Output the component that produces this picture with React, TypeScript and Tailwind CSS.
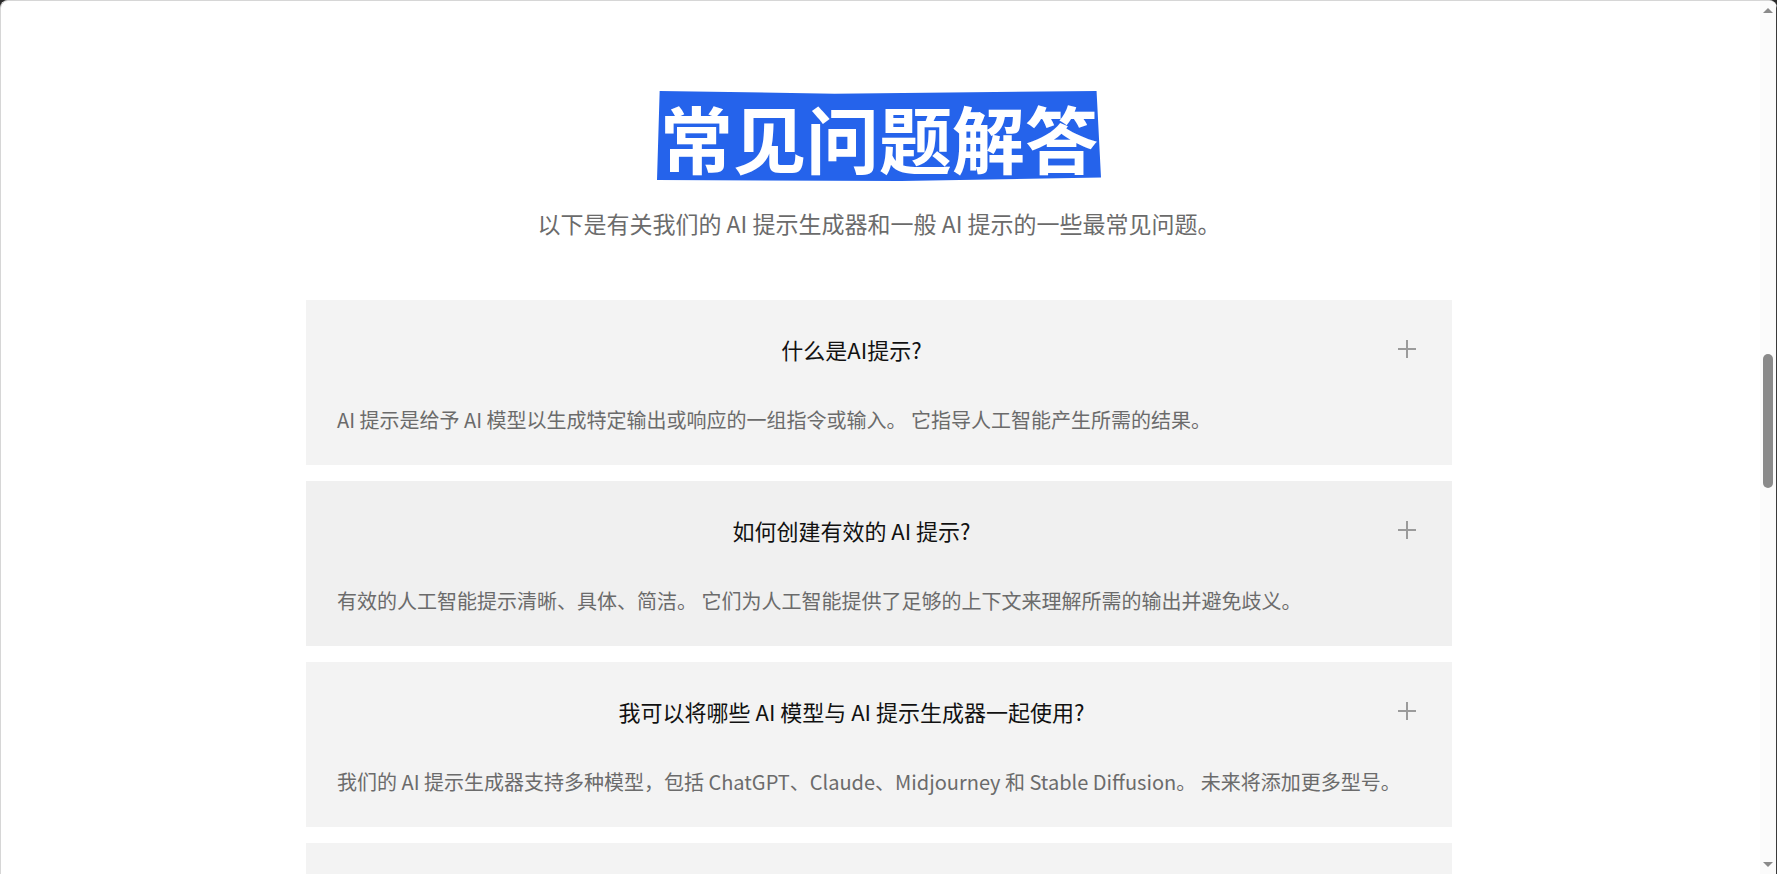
import React from "react";

const faqs = [
  {
    q: "什么是AI提示?",
    a: "AI 提示是给予 AI 模型以生成特定输出或响应的一组指令或输入。 它指导人工智能产生所需的结果。",
    bg: "bg-[#f3f3f3]",
  },
  {
    q: "如何创建有效的 AI 提示?",
    a: "有效的人工智能提示清晰、具体、简洁。 它们为人工智能提供了足够的上下文来理解所需的输出并避免歧义。",
    bg: "bg-[#f0f0f0]",
  },
  {
    q: "我可以将哪些 AI 模型与 AI 提示生成器一起使用?",
    a: "我们的 AI 提示生成器支持多种模型，包括 ChatGPT、Claude、Midjourney 和 Stable Diffusion。 未来将添加更多型号。",
    bg: "bg-[#f3f3f3]",
  },
  {
    q: "AI 提示生成器是免费使用的吗?",
    a: "是的，您可以免费使用我们的 AI 提示生成器。",
    bg: "bg-[#f3f3f3]",
  },
];

function PlusIcon() {
  return (
    <svg width="20" height="20" viewBox="0 0 20 20" className="shrink-0">
      <path d="M10 1 V19 M1 10 H19" stroke="#9b9b9b" strokeWidth="2" fill="none" />
    </svg>
  );
}

export default function App() {
  return (
    <div
      className="h-screen w-full overflow-hidden bg-[#2a2a2a]"
      style={{ fontFamily: '"Noto Sans CJK SC", "Noto Sans", sans-serif' }}
    >
      <div className="flex h-full w-full overflow-hidden rounded-t-[8px] border-t border-l border-[#d6d6d6] bg-white">
        <main className="flex-1 overflow-hidden pr-[3px]">
          <div className="flex flex-col items-center pt-[90px]">
            <h1 className="bg-[#2563eb] px-[3px] text-[73px] font-bold leading-[90px] text-white [clip-path:polygon(0.6%_0%,40%_3%,99%_0%,100%_96%,55%_100%,0%_99%)]">
              常见问题解答
            </h1>
            <p className="mt-[26px] text-[23px] leading-[33px] text-[#6b6b6b]">
              以下是有关我们的 AI 提示生成器和一般 AI 提示的一些最常见问题。
            </p>
            <div className="mt-[60px] flex w-[1146px] flex-col gap-[16px]">
              {faqs.map((f) => (
                <div key={f.q} className={`${f.bg} pt-[33px] pb-[30px] pl-[31px] pr-[35px]`}>
                  <div className="flex items-center">
                    <div className="flex-1 text-center text-[22px] leading-[32px] text-[#111111]">
                      {f.q}
                    </div>
                    <div className="ml-[31px] flex items-center">
                      <PlusIcon />
                    </div>
                  </div>
                  <p className="mt-[40px] whitespace-nowrap text-[20px] leading-[30px] text-[#6b6b6b]">
                    {f.a}
                  </p>
                </div>
              ))}
            </div>
          </div>
        </main>
        <div className="flex w-[17px] shrink-0 flex-col items-center border-r border-[#3a3a3a] bg-[#fbfbfb]">
          <div className="mt-[7px] h-0 w-0 border-x-[5px] border-b-[5px] border-x-transparent border-b-[#8a8a8a]" />
          <div className="mt-[341px] h-[134px] w-[10px] rounded-full bg-[#8a8a8a]" />
          <div className="flex-1" />
          <div className="mb-[7px] h-0 w-0 border-x-[5px] border-t-[5px] border-x-transparent border-t-[#8a8a8a]" />
        </div>
      </div>
    </div>
  );
}
